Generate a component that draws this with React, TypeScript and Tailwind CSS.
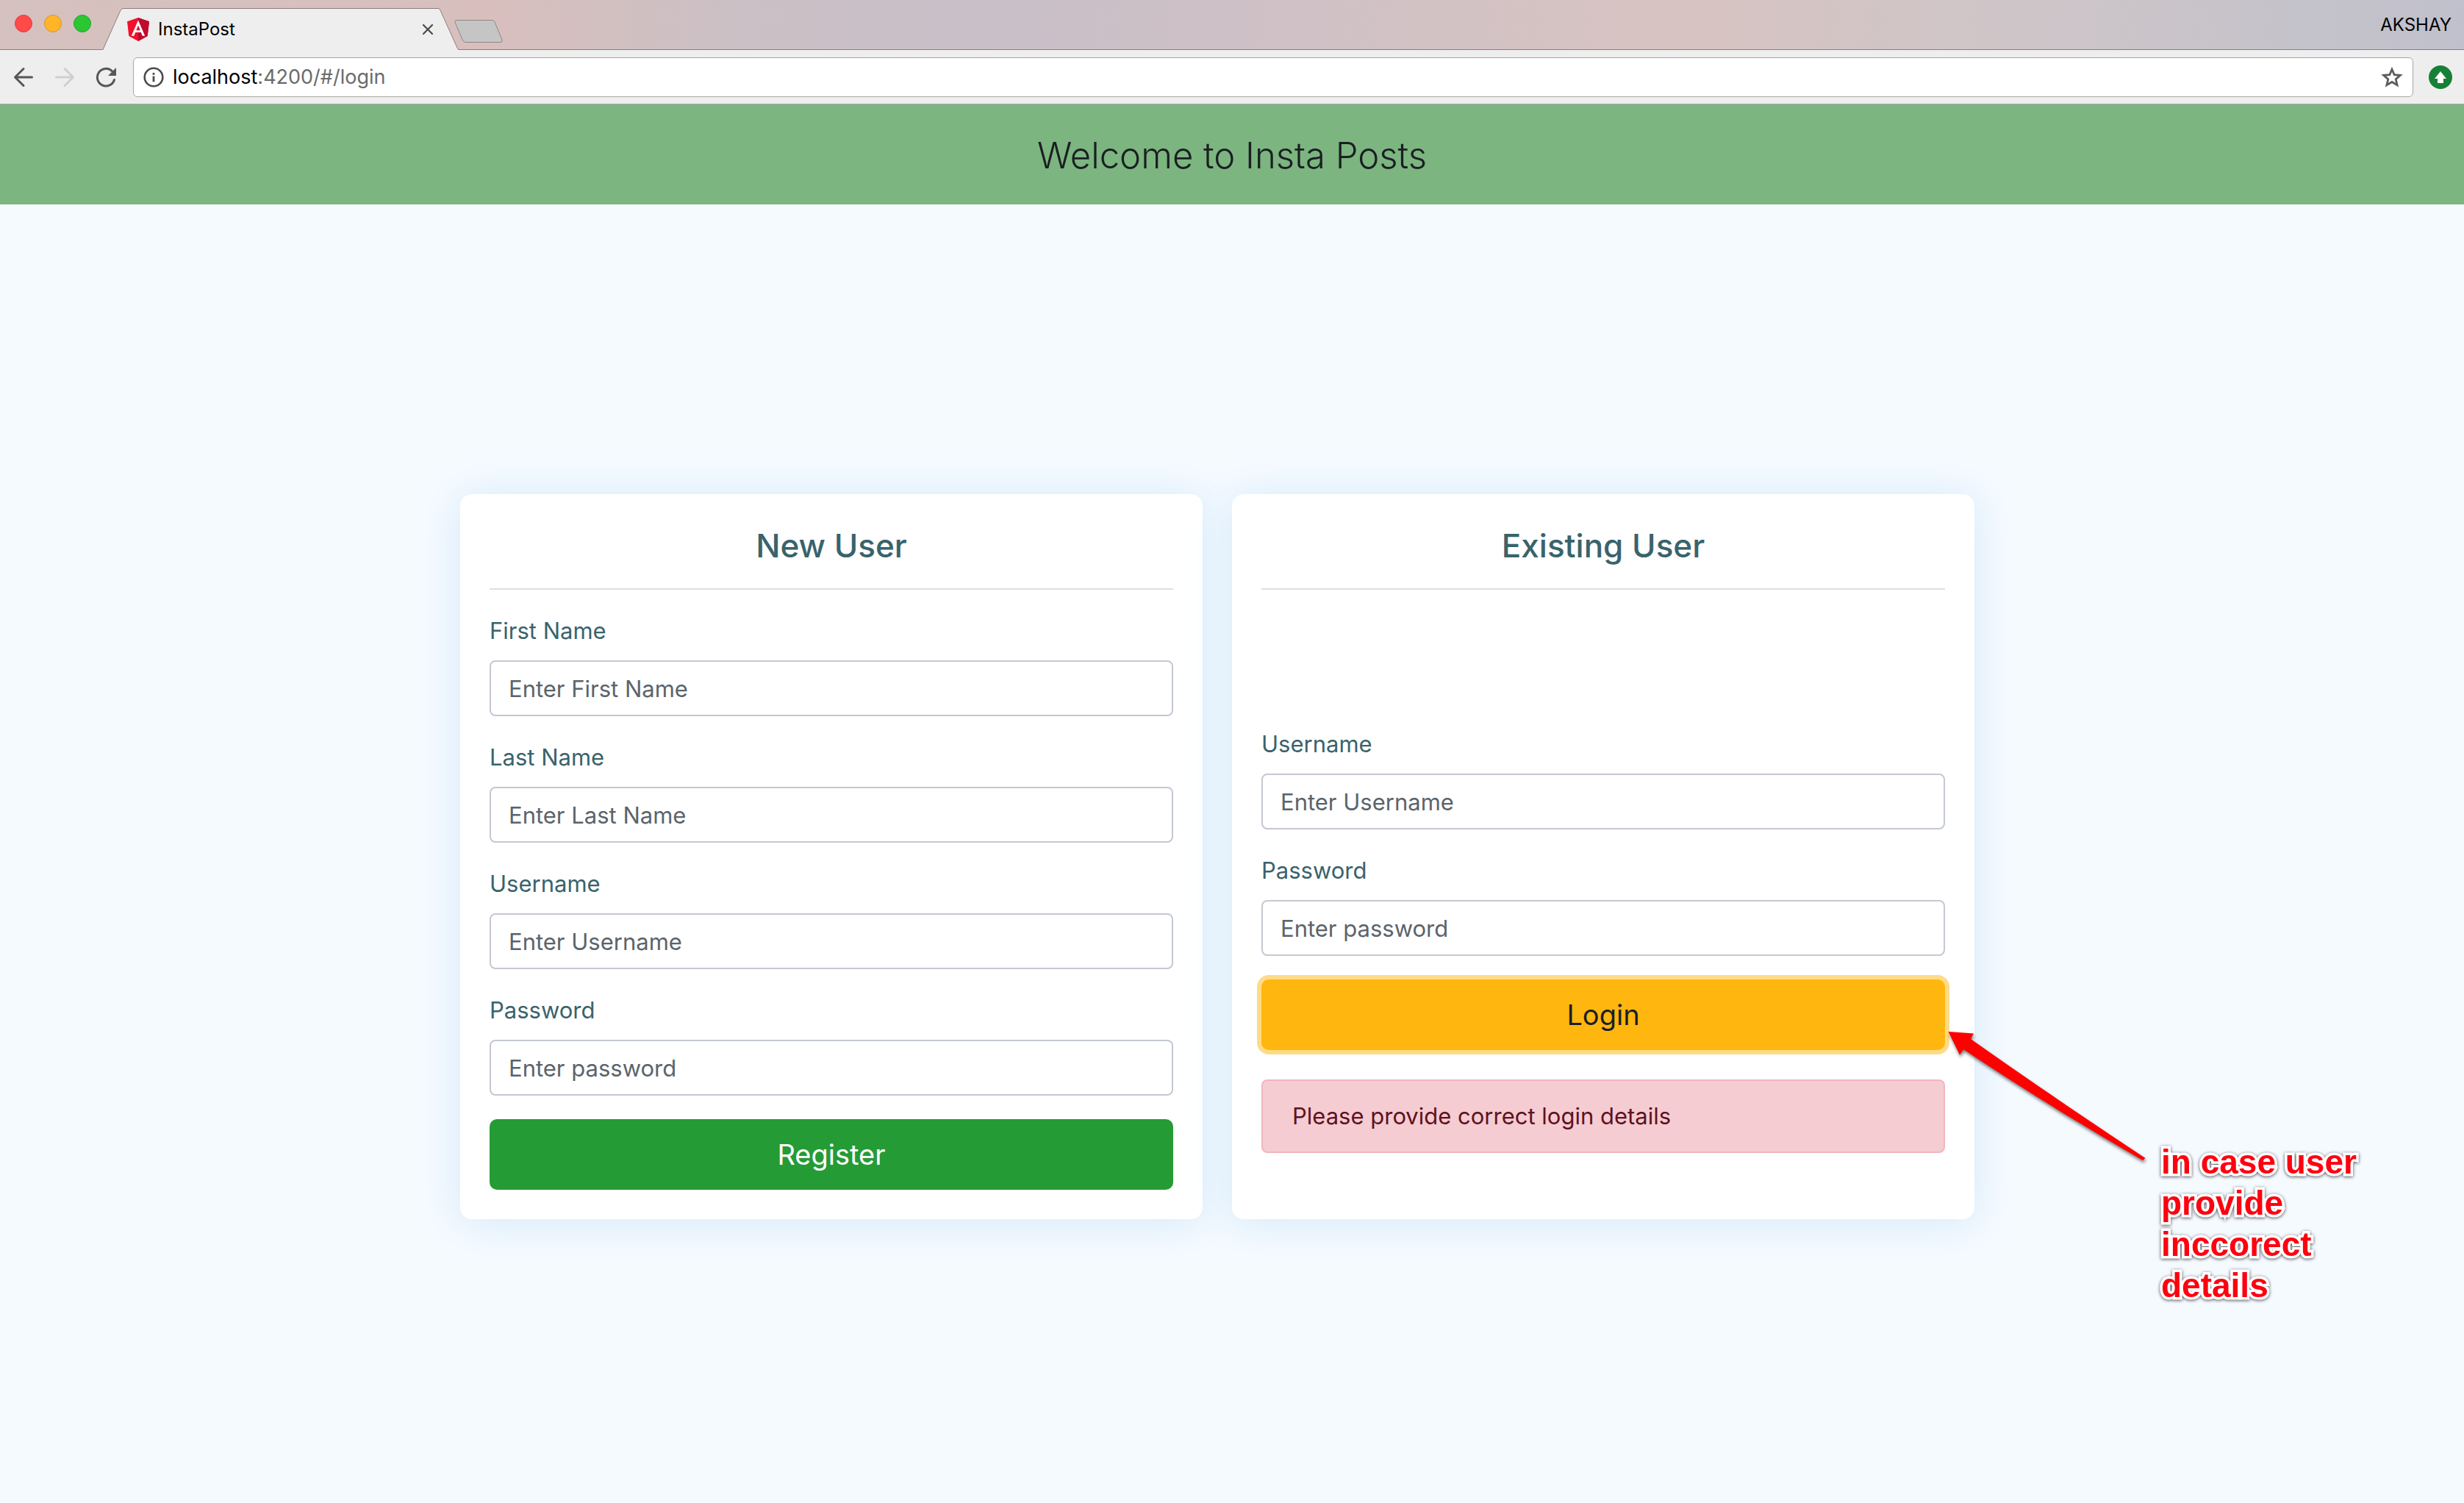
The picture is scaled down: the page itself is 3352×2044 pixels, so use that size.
import React, { useId } from "react";

function AngularLogo() {
  return (
    <svg viewBox="0 0 30 32" className="h-8 w-[30px] shrink-0" aria-hidden="true">
      <path d="M15 0 30 5.2 27.7 25 15 32 2.3 25 0 5.2Z" fill="#f0122d" />
      <path d="M15 0 30 5.2 27.7 25 15 32Z" fill="#c00a2c" />
      <path
        d="M15 3.6 5.8 24.8h3.5l1.9-4.7h7.6l1.9 4.7h3.5L15 3.6Zm2.7 13.6h-5.4L15 10.6l2.7 6.6Z"
        fill="#fff"
      />
    </svg>
  );
}

function BrowserTab() {
  return (
    <div className="relative -mb-px flex h-[57px] w-[484px] items-center self-end">
      <svg
        viewBox="0 0 484 57"
        preserveAspectRatio="none"
        className="absolute inset-0 h-full w-full"
        aria-hidden="true"
      >
        <path d="M0 57 24 3Q25.500 .5 28 .5H456Q458 .5 459 3L482 54Q483.500 56.500 484 57Z" fill="#eee" />
        <path
          d="M0 56.500 24 3Q25.500 .5 28 .5H456Q458 .5 459 3L482 54Q483 56.500 484 56.500"
          fill="none"
          stroke="#8c7f7e"
        />
      </svg>
      <div className="relative flex w-full items-center pr-[34px] pl-[33px]">
        <AngularLogo />
        <span className="ml-3 flex-1 text-2xl leading-8 text-black">InstaPost</span>
        <button type="button" aria-label="Close tab">
          <svg viewBox="0 0 16 16" className="size-4" fill="none" stroke="#4a4a4a" strokeWidth="2.200">
            <path d="M2 2 14 14M14 2 2 14" strokeLinecap="round" />
          </svg>
        </button>
      </div>
    </div>
  );
}

function BrowserChrome() {
  return (
    <header>
      <div className="flex h-[68px] items-center border-b border-[#858083] bg-[linear-gradient(90deg,#d5c1bf_0%,#d8bfbd_20%,#cbc0c5_30%,#c9bfc8_40%,#cfc1c6_52%,#d7c3c1_68%,#cec5c8_82%,#c5c3ca_93%,#c0c0cc_100%)]">
        <div className="flex w-[140px] gap-4 pb-[3px] pl-5">
          <button type="button" aria-label="Close" className="size-6 rounded-full border border-[#dc3f3e] bg-[#fe4a49]" />
          <button type="button" aria-label="Minimise" className="size-6 rounded-full border border-[#dc952a] bg-[#ffb429]" />
          <button type="button" aria-label="Zoom" className="size-6 rounded-full border border-[#22a52b] bg-[#2bc732]" />
        </div>
        <BrowserTab />
        <button type="button" aria-label="New tab" className="-ml-2 mt-[18px] self-start">
          <svg viewBox="0 0 68 50" className="h-[50px] w-[68px]">
            <path
              d="M4.500 9.500H53Q56 9.500 57 12L67 36Q68 39.500 65 39.500H18Q15 39.500 13.500 37L3 12.500Q2 9.500 4.500 9.500Z"
              fill="#c5c5c5"
              stroke="#8f8785"
            />
          </svg>
        </button>
        <span className="ml-auto pr-[17px] text-2xl leading-8 text-black">AKSHAY</span>
      </div>

      <nav className="flex h-[74px] items-center border-b border-[#a7a3a6] bg-[#eee] pr-4 pl-[18px]">
        <button type="button" aria-label="Back">
          <svg viewBox="0 0 28 28" className="size-7" fill="none" stroke="#565656" strokeWidth="3" strokeLinecap="round" strokeLinejoin="round">
            <path d="M25.500 14H3M14 2.500 2.500 14 14 25.500" />
          </svg>
        </button>
        <button type="button" aria-label="Forward" className="ml-7">
          <svg viewBox="0 0 28 28" className="size-7" fill="none" stroke="#cfcfcf" strokeWidth="3" strokeLinecap="round" strokeLinejoin="round">
            <path d="M2.500 14H25M14 2.500 25.500 14 14 25.500" />
          </svg>
        </button>
        <button type="button" aria-label="Reload" className="ml-7">
          <svg viewBox="0 0 28 28" className="size-7">
            <path d="M25.500 17.500A11.800 11.800 0 1 1 22.500 5.800" fill="none" stroke="#565656" strokeWidth="3" strokeLinecap="round" />
            <path d="M28 1V12H17Z" fill="#565656" />
          </svg>
        </button>
        <div className="ml-[23px] flex h-[54px] flex-1 items-center rounded-md border border-[#a8a8a8] bg-white pr-[13px] pl-[13px]">
          <svg viewBox="0 0 28 28" className="size-7 shrink-0" aria-hidden="true">
            <circle cx="14" cy="14" r="12.300" fill="none" stroke="#4c4c4c" strokeWidth="2.600" />
            <path d="M12.600 8h2.800v2.800h-2.800zM12.600 12.600h2.800v7.600h-2.800z" fill="#4c4c4c" />
          </svg>
          <span className="ml-3 flex-1 text-[27px] leading-9 text-[#6b6b6b]">
            <span className="text-black">localhost</span>:4200/#/login
          </span>
          <button type="button" aria-label="Bookmark this page">
            <svg viewBox="0 0 30 30" className="size-[30px]" fill="none" stroke="#5c5c5c" strokeWidth="2.800">
              <path d="M15 4.200 18.200 11.700 26.300 12.400 20.200 17.700 22.100 25.700 15 21.500 7.900 25.700 9.800 17.700 3.700 12.400 11.800 11.700Z" />
            </svg>
          </button>
        </div>
        <button type="button" aria-label="Extension update" className="ml-[21px]">
          <svg viewBox="0 0 32 32" className="size-8">
            <circle cx="16" cy="16" r="16" fill="#178037" />
            <path d="M16 8 24 18H20V24H12V18H8Z" fill="#fff" />
          </svg>
        </button>
      </nav>
    </header>
  );
}

function Field({ label, placeholder, type = "text" }: { label: string; placeholder: string; type?: string }) {
  const id = useId();
  return (
    <div className="flex flex-col gap-4">
      <label htmlFor={id} className="text-[31px] leading-[48px] text-[#39636c]">
        {label}
      </label>
      <input
        id={id}
        type={type}
        placeholder={placeholder}
        className="h-[76px] w-full rounded-lg border-2 border-[#c3c8d1] bg-white px-6 text-[31px] text-[#495057] placeholder:text-[#5b646c] placeholder:opacity-100"
      />
    </div>
  );
}

function Card({ title, children }: { title: string; children: React.ReactNode }) {
  return (
    <section className="relative rounded-2xl bg-white px-10 pt-[42px] pb-10 shadow-[0_4px_56px_#d4e9f8]">
      <h2 className="text-center text-[44px] leading-[56px] font-medium text-[#39636c]">{title}</h2>
      <hr className="mt-[30px] mb-8 border-t-2 border-[#dfdfdf]" />
      {children}
    </section>
  );
}

function Annotation() {
  return (
    <aside className="absolute top-[721px] left-full -ml-[46px] flex w-[580px] items-start">
      <svg viewBox="0 0 290 200" className="h-[200px] w-[290px] shrink-0 drop-shadow-[1px_3px_2px_#00000088]" aria-hidden="true">
        <path d="M10.500 10 45 12.500 41 20Q150 97 278.500 182L275 185Q145 110 31 34L26 41.500Z" fill="#f00" />
      </svg>
      <p className="mt-[159px] ml-[10px] w-[280px] font-['Liberation_Sans',sans-serif] text-[46px] leading-[56px] font-bold text-[#fe0010] drop-shadow-[0_1px_2px_#000000aa] [-webkit-text-stroke:7px_white] [paint-order:stroke_fill]">
        in case user provide inccorect details
      </p>
    </aside>
  );
}

export default function App() {
  return (
    <div className="flex min-h-screen flex-col overflow-x-hidden bg-[#f5faff] font-[Inter,sans-serif]">
      <BrowserChrome />
      <h1 className="bg-[#7cb57f] pt-[38px] pb-[34px] text-center text-[49px] leading-[64px] font-light text-[#1a1f23]">
        Welcome to Insta Posts
      </h1>
      <main className="flex flex-1 items-center justify-center pt-2 pr-10">
        <div className="grid w-full max-w-[2060px] grid-cols-2 gap-10">
          <Card title="New User">
            <form className="flex flex-col gap-8" onSubmit={(e) => e.preventDefault()}>
              <Field label="First Name" placeholder="Enter First Name" />
              <Field label="Last Name" placeholder="Enter Last Name" />
              <Field label="Username" placeholder="Enter Username" />
              <Field label="Password" placeholder="Enter password" type="password" />
              <button type="submit" className="h-24 rounded-[10px] bg-[#259b35] text-[38px] text-white">
                Register
              </button>
            </form>
          </Card>
          <Card title="Existing User">
            <form className="flex flex-col gap-8 pt-[154px]" onSubmit={(e) => e.preventDefault()}>
              <Field label="Username" placeholder="Enter Username" />
              <Field label="Password" placeholder="Enter password" type="password" />
              <button
                type="submit"
                className="h-24 rounded-[10px] bg-[#ffb60f] text-[38px] text-[#1a1f23] shadow-[0_0_0_6px_#ffdb87]"
              >
                Login
              </button>
            </form>
            <p
              role="alert"
              className="mt-10 rounded-lg border-2 border-[#f1b6c0] bg-[#f4ccd2] px-10 py-6 text-[31px] leading-[48px] text-[#5f121e]"
            >
              Please provide correct login details
            </p>
            <Annotation />
          </Card>
        </div>
      </main>
    </div>
  );
}
